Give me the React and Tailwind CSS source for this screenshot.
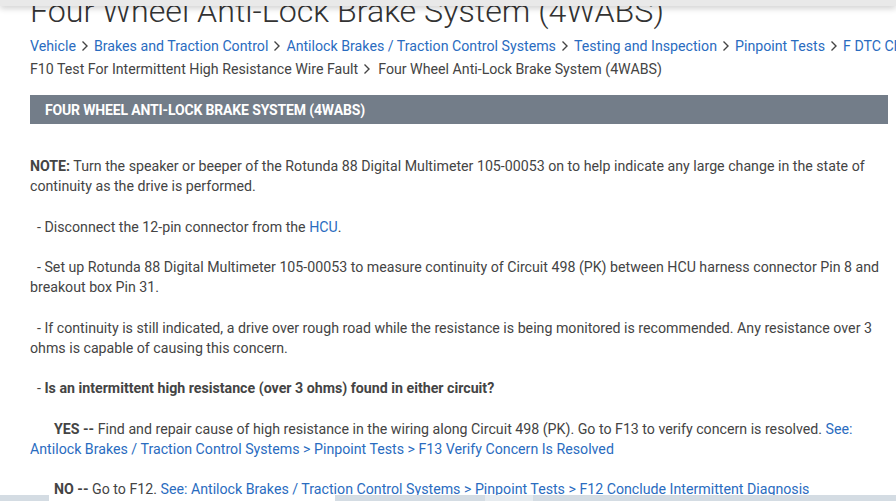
import React from "react";

const Chev = ({ extra = "" }) => (
  <svg width="8" height="12" viewBox="0 0 8 12" className={"inline-block ml-[5px] align-[-1px] " + (extra || "mr-[5px]")}>
    <path d="M1.5 1.5 L6 6 L1.5 10.5" fill="none" stroke="#444" strokeWidth="1.4" />
  </svg>
);

const A = ({ children }) => <a className="text-[#2a6cbf]">{children}</a>;

export default function App() {
  return (
    <div
      className="relative h-[501px] w-[896px] overflow-hidden bg-white text-[#444]"
      style={{ fontFamily: "Roboto, 'Noto Sans', sans-serif" }}
    >
      <div className="absolute left-0 top-0 z-10 h-[6px] w-full bg-[#e9e9e9] shadow-[0_2px_6px_rgba(0,0,0,0.22)]" />

      <div className="ml-[30px] w-[858px]">
        <h1 className="mt-[-5px] whitespace-nowrap text-[32.2px] font-light leading-[32px] text-[#333]">
          Four Wheel Anti-Lock Brake System (4WABS)
        </h1>

        <div className="mt-[8px] text-[14.2px] leading-[23px]">
          <div className="whitespace-nowrap">
            <A>Vehicle</A>
            <Chev />
            <A>Brakes and Traction Control</A>
            <Chev />
            <A>Antilock Brakes / Traction Control Systems</A>
            <Chev />
            <A>Testing and Inspection</A>
            <Chev />
            <A>Pinpoint Tests</A>
            <Chev />
            <A>F DTC Charts</A>
          </div>
          <div className="whitespace-nowrap">
            F10 Test For Intermittent High Resistance Wire Fault
            <Chev extra="mr-[7px]" />
            Four Wheel Anti-Lock Brake System (4WABS)
          </div>
        </div>

        <div className="mt-[14px] flex h-[29px] items-center bg-[#737d89] pl-[15px] pt-[2px] text-[14px] font-bold tracking-[-0.15px] text-white">
          FOUR WHEEL ANTI-LOCK BRAKE SYSTEM (4WABS)
        </div>

        <div className="mt-[32px] flex flex-col gap-[20.2px] text-[14.2px] leading-[20.2px]">
          <p>
            <b className="font-bold">NOTE:</b> Turn the speaker or beeper of the Rotunda 88 Digital Multimeter 105-00053 on to help indicate any large change in the state of continuity as the drive is performed.
          </p>
          <p>
            <span className="pl-[7px]">- Disconnect the 12-pin connector from the </span>
            <A>HCU</A>.
          </p>
          <p>
            <span className="pl-[7px]">- Set up Rotunda 88 Digital Multimeter 105-00053 to measure continuity of Circuit 498 (PK) between HCU harness connector Pin 8 and breakout box Pin 31.</span>
          </p>
          <p>
            <span className="pl-[7px]">- If continuity is still indicated, a drive over rough road while the resistance is being monitored is recommended. Any resistance over 3 ohms is capable of causing this concern.</span>
          </p>
          <p>
            <span className="pl-[7px]">- </span>
            <b className="font-bold">Is an intermittent high resistance (over 3 ohms) found in either circuit?</b>
          </p>
          <p>
            <b className="pl-[24px] font-bold">YES --</b> Find and repair cause of high resistance in the wiring along Circuit 498 (PK). Go to F13 to verify concern is resolved.{" "}
            <A>See: Antilock Brakes / Traction Control Systems &gt; Pinpoint Tests &gt; F13 Verify Concern Is Resolved</A>
          </p>
          <p>
            <b className="pl-[24px] font-bold">NO --</b> Go to F12.{" "}
            <A>See: Antilock Brakes / Traction Control Systems &gt; Pinpoint Tests &gt; F12 Conclude Intermittent Diagnosis</A>
          </p>
        </div>
      </div>

      <div className="absolute bottom-0 left-0 z-10 flex h-[6px] w-full bg-[#d4dce3]">
        <div className="ml-[49px] h-full w-[286px] bg-white" />
        <div className="ml-[150px] h-full w-[48px] bg-[#e6ebef]" />
      </div>
    </div>
  );
}
